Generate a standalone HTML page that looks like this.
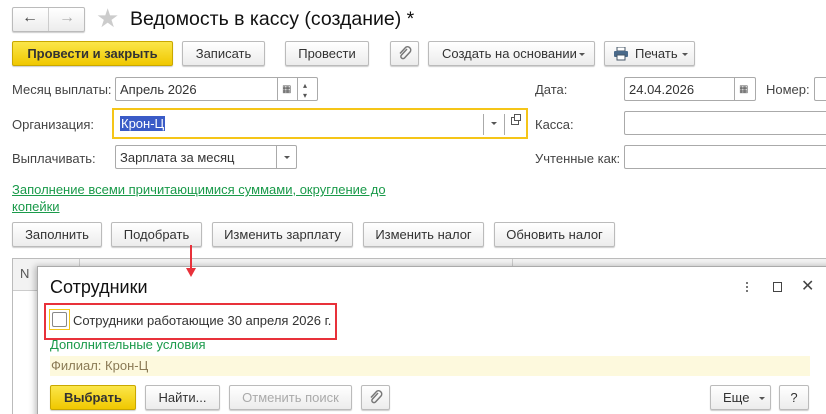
<!DOCTYPE html>
<html><head><meta charset="utf-8"><style>
*{box-sizing:border-box;margin:0;padding:0}
html,body{width:826px;height:414px;overflow:hidden}
body{background:#fff;font-family:"Liberation Sans","DejaVu Sans",sans-serif;font-size:13px;color:#333;position:relative}
.a{position:absolute}
.btn{position:absolute;height:25px;border:1px solid #bbb;border-radius:2px;background:linear-gradient(#fff,#ececec);box-shadow:0 1px 1px rgba(0,0,0,.2);text-align:center;line-height:23px;color:#333;white-space:nowrap}
.y{background:linear-gradient(#fbe64a,#f0c800);border-color:#c9a800;font-weight:bold;color:#333}
.inp{position:absolute;border:1px solid #aaa;border-radius:2px;background:#fff;height:24px;line-height:23px;padding-left:4px;color:#333}
.lbl{position:absolute;color:#444}
.dv{position:absolute;top:0;bottom:0;border-left:1px solid #aaa}
.tri{position:absolute;width:0;height:0;border-left:3px solid transparent;border-right:3px solid transparent;border-top:3px solid #555}
</style></head><body>
<div class="btn" style="left:12px;top:7px;width:73px;height:25px"></div>
<div class="a" style="left:48px;top:8px;height:23px;border-left:1px solid #ccc"></div>
<div class="a" style="left:22px;top:9px;font-size:16px;color:#444;font-weight:bold">&#8592;</div>
<div class="a" style="left:59px;top:9px;font-size:16px;color:#aaa;font-weight:bold">&#8594;</div>
<div class="a" style="left:96px;top:3px;font-size:26px;color:#ccc">&#9733;</div>
<div class="a" style="left:130px;top:8px;font-size:19.5px;color:#111">Ведомость в кассу (создание) *</div>
<div class="btn y" style="left:12px;top:41px;width:161px">Провести и закрыть</div>
<div class="btn" style="left:182px;top:41px;width:83px">Записать</div>
<div class="btn" style="left:285px;top:41px;width:84px">Провести</div>
<div class="btn" style="left:390px;top:41px;width:29px"><svg class="a" style="left:7px;top:4px" width="14" height="15" viewBox="0 0 14 15"><path d="M9 3 L3.5 9 a2 2 0 0 0 3 3 L12 6 a3.2 3.2 0 0 0 -4.5 -4.5 L2 7.5" fill="none" stroke="#777" stroke-width="1.5"/></svg></div>
<div class="btn" style="left:428px;top:41px;width:167px;text-align:left;padding-left:13px">Создать на основании<div class="tri" style="left:150px;top:11px"></div></div>
<div class="btn" style="left:604px;top:41px;width:91px;text-align:left;padding-left:30px">Печать<div class="tri" style="left:77px;top:11px"></div>
<svg class="a" style="left:8px;top:5px" width="16" height="14"><rect x="4" y="0" width="8" height="4" fill="#fff" stroke="#456" /><rect x="1" y="4" width="14" height="6" rx="1" fill="#4a6a8a"/><rect x="4" y="8" width="8" height="5" fill="#fff" stroke="#456"/></svg></div>
<div class="lbl" style="left:12px;top:82px">Месяц выплаты:</div>
<div class="inp" style="left:115px;top:77px;width:203px">Апрель 2026
<div class="dv" style="left:161px"></div><div class="dv" style="left:181px"></div>
<div class="a" style="left:166px;top:0;font-size:10px;color:#555">&#9638;</div>
<div class="a" style="left:187px;top:-4px;font-size:8px;color:#555">&#9652;</div>
<div class="a" style="left:187px;top:6px;font-size:8px;color:#555">&#9662;</div></div>
<div class="lbl" style="left:535px;top:82px">Дата:</div>
<div class="inp" style="left:624px;top:77px;width:132px">24.04.2026<div class="dv" style="left:109px"></div>
<div class="a" style="left:114px;top:0;font-size:10px;color:#555">&#9638;</div></div>
<div class="lbl" style="left:766px;top:82px">Номер:</div>
<div class="inp" style="left:814px;top:77px;width:20px"></div>
<div class="lbl" style="left:12px;top:117px">Организация:</div>
<div class="a" style="left:112px;top:108px;width:416px;height:31px;border:2px solid #f5c518;background:#fff">
<span class="a" style="left:6px;top:6px;background:#3a5bc7;color:#fff;padding:0 1px">Крон-Ц</span>
<div class="a" style="left:369px;top:4px;height:21px;border-left:1px solid #aaa"></div>
<div class="a" style="left:390px;top:4px;height:21px;border-left:1px solid #aaa"></div>
<div class="tri" style="left:377px;top:12px"></div>
<div class="a" style="left:397px;top:7px;width:8px;height:8px;border:1px solid #555;background:#fff"></div>
<div class="a" style="left:400px;top:4px;width:7px;height:7px;border:1px solid #555;background:#fff"></div></div>
<div class="lbl" style="left:535px;top:117px">Касса:</div>
<div class="inp" style="left:624px;top:111px;width:210px"></div>
<div class="lbl" style="left:12px;top:151px">Выплачивать:</div>
<div class="inp" style="left:115px;top:145px;width:182px">Зарплата за месяц<div class="dv" style="left:160px"></div><div class="tri" style="left:168px;top:10px"></div></div>
<div class="lbl" style="left:535px;top:151px">Учтенные как:</div>
<div class="inp" style="left:624px;top:145px;width:210px"></div>
<div class="a" style="left:12px;top:181px;color:#1a9a4a;text-decoration:underline;line-height:17px;width:400px">Заполнение всеми причитающимися суммами, округление до<br>копейки</div>
<div class="btn" style="left:12px;top:222px;width:90px">Заполнить</div>
<div class="btn" style="left:111px;top:222px;width:91px">Подобрать</div>
<div class="btn" style="left:212px;top:222px;width:141px">Изменить зарплату</div>
<div class="btn" style="left:363px;top:222px;width:121px">Изменить налог</div>
<div class="btn" style="left:494px;top:222px;width:121px">Обновить налог</div>
<div class="a" style="left:12px;top:258px;width:830px;height:160px;border:1px solid #bbb;background:#fff"></div>
<div class="a" style="left:13px;top:259px;width:830px;height:32px;background:#f2f2f2;border-bottom:1px solid #ccc"></div>
<div class="a" style="left:79px;top:259px;height:32px;border-left:1px solid #ccc"></div>
<div class="a" style="left:512px;top:259px;height:10px;border-left:1px solid #ccc"></div>
<div class="a" style="left:20px;top:266px;color:#555">N</div>
<div class="a" style="left:37px;top:266px;width:800px;height:160px;background:#fff;border:1px solid #aaa;box-shadow:-2px 0 6px rgba(0,0,0,.25)"></div>
<div class="a" style="left:50px;top:277px;font-size:18px;color:#111">Сотрудники</div>
<div class="a" style="left:746px;top:282px;width:2px;height:2px;background:#777;box-shadow:0 4px #777,0 8px #777"></div>
<div class="a" style="left:773px;top:282px;width:9px;height:10px;border:1px solid #444"></div>
<div class="a" style="left:801px;top:276px;font-size:16px;color:#444">&#x2715;</div>
<div class="a" style="left:44px;top:303px;width:293px;height:37px;border:2px solid #e8313a"></div>
<div class="a" style="left:49px;top:309px;width:21px;height:21px;border:1px solid #f5c518"><div class="a" style="left:2px;top:2px;width:15px;height:15px;border:1px solid #888;border-radius:2px"></div></div>
<div class="a" style="left:73px;top:313px;color:#333">Сотрудники работающие 30 апреля 2026 г.</div>
<div class="a" style="left:50px;top:337px;color:#1a9a4a">Дополнительные условия</div>
<div class="a" style="left:50px;top:356px;width:760px;height:20px;background:#fdf9dd;color:#8a7a55;line-height:20px;padding-left:1px">Филиал: Крон-Ц</div>
<div class="btn y" style="left:50px;top:385px;width:86px">Выбрать</div>
<div class="btn" style="left:145px;top:385px;width:75px">Найти...</div>
<div class="btn" style="left:229px;top:385px;width:123px;color:#aaa">Отменить поиск</div>
<div class="btn" style="left:361px;top:385px;width:29px"><svg class="a" style="left:7px;top:4px" width="14" height="15" viewBox="0 0 14 15"><path d="M9 3 L3.5 9 a2 2 0 0 0 3 3 L12 6 a3.2 3.2 0 0 0 -4.5 -4.5 L2 7.5" fill="none" stroke="#777" stroke-width="1.5"/></svg></div>
<div class="btn" style="left:710px;top:385px;width:61px;text-align:left;padding-left:12px">Еще<div class="tri" style="left:48px;top:11px"></div></div>
<div class="btn" style="left:779px;top:385px;width:30px">?</div>
<div class="a" style="left:190px;top:245px;height:25px;border-left:2px solid #e8313a"></div>
<div class="a" style="left:186px;top:268px;border-left:5px solid transparent;border-right:5px solid transparent;border-top:9px solid #e8313a"></div>
</body></html>
